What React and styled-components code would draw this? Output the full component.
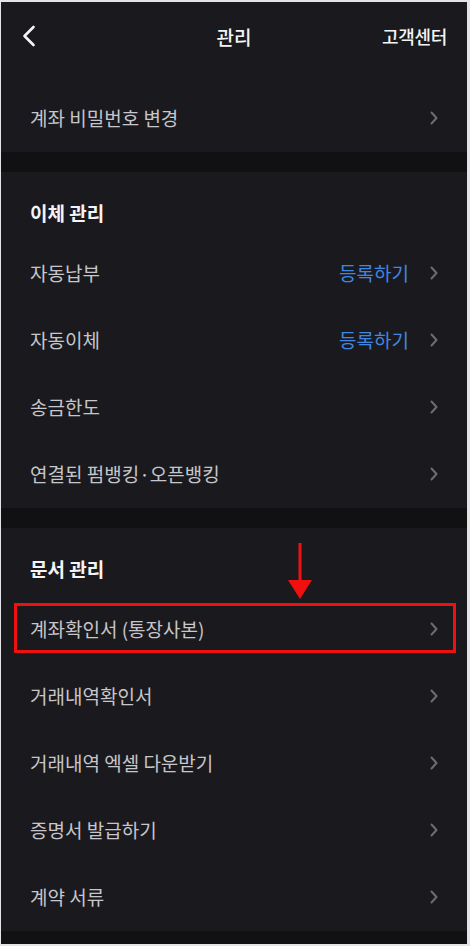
import React from 'react';
import styled, { createGlobalStyle } from 'styled-components';

const GlobalStyle = createGlobalStyle`
    html, body {
        margin: 0;
        padding: 0;
        background: #e4e4e6;
    }
    * {
        box-sizing: border-box;
    }
`;

const transferItems = [
    { label: '자동납부', action: '등록하기' },
    { label: '자동이체', action: '등록하기' },
    { label: '송금한도' },
    { label: '연결된 펌뱅킹·오픈뱅킹' },
];

const documentItems = [
    { label: '계좌확인서 (통장사본)', highlighted: true },
    { label: '거래내역확인서' },
    { label: '거래내역 엑셀 다운받기' },
    { label: '증명서 발급하기' },
    { label: '계약 서류' },
];

const Chevron = () => (
    <svg width="8" height="14" viewBox="0 0 8 14" fill="none">
        <path d="M1.5 1.5L6.5 7L1.5 12.5" stroke="#6c6c72" strokeWidth="2" strokeLinecap="round" strokeLinejoin="round" />
    </svg>
);

const BackIcon = () => (
    <svg width="14" height="22" viewBox="0 0 14 22" fill="none">
        <path d="M11.5 2L2.5 11L11.5 20" stroke="#f4f4f6" strokeWidth="2.6" strokeLinecap="round" strokeLinejoin="round" />
    </svg>
);

const MenuRow = ({ label, action, highlighted }) => (
    <Row>
        <RowLabel>{label}</RowLabel>
        <RowRight>
            {action && <RowAction>{action}</RowAction>}
            <Chevron />
        </RowRight>
        {highlighted && (
            <>
                <Highlight />
                <Arrow>
                    <svg width="24" height="56" viewBox="0 0 24 56">
                        <rect x="10.5" y="0" width="3" height="40" fill="#f01010" />
                        <path d="M0 37H24L12 56Z" fill="#f01010" />
                    </svg>
                </Arrow>
            </>
        )}
    </Row>
);

const App = () => {
    return (
        <Frame>
            <GlobalStyle />
            <Header>
                <BackButton><BackIcon /></BackButton>
                <Title>관리</Title>
                <HeaderLink>고객센터</HeaderLink>
            </Header>

            <Section $first>
                <MenuRow label="계좌 비밀번호 변경" />
            </Section>

            <Divider />

            <Section>
                <SectionTitle>이체 관리</SectionTitle>
                {transferItems.map((item) => (
                    <MenuRow key={item.label} {...item} />
                ))}
            </Section>

            <Divider />

            <Section>
                <SectionTitle>문서 관리</SectionTitle>
                {documentItems.map((item) => (
                    <MenuRow key={item.label} {...item} />
                ))}
            </Section>

            <BottomBand />
        </Frame>
    );
};

export default App;


/* Styled Components */
const Frame = styled.div`
    width: 470px;
    height: 946px;
    overflow: hidden;
    background-color: #1a1a1e;
    border-top: 2px solid #e4e4e6;
    border-left: 1px solid #e4e4e6;
    border-right: 3px solid #e4e4e6;
    border-bottom: 2px solid #e4e4e6;
    font-family: 'Noto Sans CJK KR', 'Noto Sans', sans-serif;
    display: flex;
    flex-direction: column;
`;

const Header = styled.header`
    height: 68px;
    display: flex;
    align-items: center;
    justify-content: space-between;
    padding: 0 20px 0 21px;
    position: relative;
`;

const BackButton = styled.div`
    display: flex;
    align-items: center;
    width: 40px;
`;

const Title = styled.h1`
    position: absolute;
    left: 50%;
    transform: translateX(-50%);
    margin: 0;
    font-size: 19px;
    font-weight: 500;
    color: #f4f4f6;
`;

const HeaderLink = styled.span`
    font-size: 18px;
    font-weight: 500;
    color: #f4f4f6;
    letter-spacing: -0.3px;
`;

const Section = styled.section`
    display: flex;
    flex-direction: column;
    padding-top: ${(p) => (p.$first ? '15px' : '0')};
`;

const SectionTitle = styled.h2`
    margin: 0;
    height: 68px;
    padding: 29px 29px 0;
    font-size: 19px;
    line-height: 24px;
    font-weight: 700;
    color: #f4f4f6;
`;

const Divider = styled.div`
    height: 20px;
    background-color: #111114;
`;

const BottomBand = styled.div`
    flex: 1;
    background-color: #111114;
`;

const Row = styled.div`
    position: relative;
    height: 67px;
    display: flex;
    align-items: center;
    justify-content: space-between;
    padding: 0 29px 2px 29px;
`;

const RowLabel = styled.span`
    font-size: 19px;
    color: #c6c6cb;
`;

const RowRight = styled.div`
    display: flex;
    align-items: center;
    gap: 21px;
`;

const RowAction = styled.span`
    font-size: 19px;
    color: #3f87e2;
`;

const Highlight = styled.div`
    position: absolute;
    left: 13px;
    right: 11px;
    top: 7px;
    bottom: 10px;
    border: 3px solid #f01010;
    pointer-events: none;
`;

const Arrow = styled.div`
    position: absolute;
    left: 287px;
    top: -53px;
    line-height: 0;
`;
